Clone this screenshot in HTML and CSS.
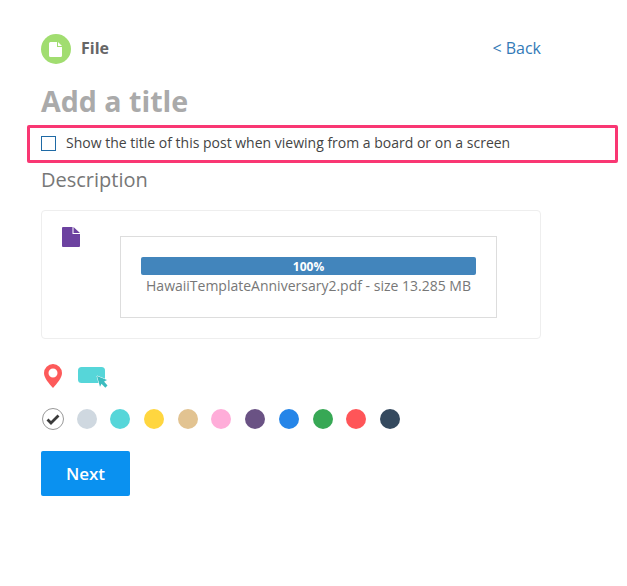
FILE: index.html
```html
<!DOCTYPE html>
<html lang="en">
<head>
<meta charset="utf-8">
<title>File</title>
<link rel="stylesheet" href="styles.css">
</head>
<body>
<main class="page">
  <header class="head">
    <div class="type">
      <span class="type-icon">
        <svg width="14" height="15" viewBox="0 0 14 15"><path d="M1.500 0H8v5h5v8.500a1.500 1.500 0 0 1-1.500 1.500h-10A1.500 1.500 0 0 1 0 13.500V1.500A1.500 1.500 0 0 1 1.500 0zM9 0l4 4H9z" fill="#fff"/></svg>
      </span>
      <span class="type-name">File</span>
    </div>
    <a class="back" href="#">&lt; Back</a>
  </header>
  <h1 class="title">Add a title</h1>
  <label class="show-title">
    <span class="check"></span>
    <span class="show-text">Show the title of this post when viewing from a board or on a screen</span>
  </label>
  <div class="desc">Description</div>
  <section class="card">
    <svg class="doc" width="18" height="20" viewBox="0 0 18 20"><path d="M1 0h9.500v7H18v12a1 1 0 0 1-1 1H1a1 1 0 0 1-1-1V1a1 1 0 0 1 1-1zM11.500 0L18 6h-6.500z" fill="#6c42a0"/></svg>
    <div class="upload">
      <div class="bar">100%</div>
      <div class="fname">HawaiiTemplateAnniversary2.pdf - size 13.285 MB</div>
    </div>
  </section>
  <div class="tools">
    <svg width="18" height="24" viewBox="0 0 18 24"><path fill-rule="evenodd" d="M9 0a9 9 0 0 1 9 9c0 5-5 10.500-9 15C5 19.500 0 14 0 9a9 9 0 0 1 9-9zm0 4.500a4.500 4.500 0 1 0 0 9 4.500 4.500 0 0 0 0-9z" fill="#fd5a5a"/></svg>
    <svg width="30" height="21" viewBox="0 0 30 21"><rect x="0" y="0" width="27" height="16" rx="3.500" fill="#56d6d9"/><path class="cursor" d="M19 9l10 4-3 1.500 3.500 4-2.200 2.200-3.800-4-1.500 3z"/></svg>
  </div>
  <div class="swatches">
    <span class="swatch none">
      <svg width="14" height="11" viewBox="0 0 14 11"><path d="M1.500 5.500l3.500 3.500 7.500-7.500" fill="none" stroke="#3a3a3a" stroke-width="2.800"/></svg>
    </span>
    <span class="swatch c1"></span>
    <span class="swatch c2"></span>
    <span class="swatch c3"></span>
    <span class="swatch c4"></span>
    <span class="swatch c5"></span>
    <span class="swatch c6"></span>
    <span class="swatch c7"></span>
    <span class="swatch c8"></span>
    <span class="swatch c9"></span>
    <span class="swatch c10"></span>
  </div>
  <button class="next" type="button">Next</button>
</main>
</body>
</html>
```

FILE: styles.css
```css
* { box-sizing: border-box; }
html, body { margin: 0; padding: 0; background: #fff; }
body { font-family: "Open Sans", "Liberation Sans", sans-serif; color: #555; }
.page { width: 500px; margin-left: 41px; padding-top: 34px; }
.head { display: flex; justify-content: space-between; align-items: center; height: 30px; }
.type { display: flex; align-items: center; gap: 10px; }
.type-icon { width: 30px; height: 30px; border-radius: 50%; background: #a1dd70; display: flex; align-items: center; justify-content: center; }
.type-name { margin-bottom: 3px; font-size: 16px; font-weight: 700; color: #666; line-height: 28px; }
.back { margin-bottom: 2px; font-size: 16px; color: #337ab7; text-decoration: none; line-height: 28px; }
.title { margin: 16px 0 0; font-size: 28.600px; font-weight: 700; color: #aaa; line-height: 42px; }
.show-title { display: flex; align-items: center; gap: 10px; width: 591px; height: 38px; margin: 3px 0 0 -14px; padding: 0 0 1px 11px; border: 3px solid #f93773; border-radius: 2px; font-size: 14px; color: #444; }
.check { width: 15px; height: 15px; border: 1px solid #1f6aa5; flex: none; }
.show-text { margin-bottom: 2px; }
.desc { margin-top: 3px; font-size: 20px; line-height: 28px; color: #777; }
.card { display: flex; align-items: flex-start; height: 129px; margin-top: 16px; padding: 16px 43px 0 20px; border: 1px solid #eee; border-radius: 4px; }
.doc { flex: none; }
.upload { width: 377px; height: 82px; margin: 9px 0 0 40px; padding: 20px 20px 0; border: 1px solid #ddd; }
.bar { height: 18px; padding-top: 1px; background: #4285bc; border-radius: 2px; color: #fff; font-size: 12px; font-weight: 700; line-height: 18px; text-align: center; }
.fname { margin-top: 1px; font-size: 14px; line-height: 20px; color: #777; text-align: center; }
.tools { display: flex; align-items: flex-start; gap: 16px; margin: 25px 0 0 3px; }
.tools svg:last-child { margin-top: 3px; }
.cursor { fill: #3cbcbf; stroke: #fff; stroke-width: 1; paint-order: stroke; }
.swatches { display: flex; align-items: center; gap: 13.700px; margin: 20px 0 0 1px; height: 22px; }
.swatch { width: 20px; height: 20px; border-radius: 50%; flex: none; }
.none { width: 22px; height: 22px; margin-right: -1px; background: #fff; border: 1px solid #999; display: flex; align-items: center; justify-content: center; }
.c1 { background: #cfd8e0; }
.c2 { background: #56d6d9; }
.c3 { background: #ffd63f; }
.c4 { background: #e2c391; }
.c5 { background: #ffadd9; }
.c6 { background: #6a5284; }
.c7 { background: #2585e8; }
.c8 { background: #37a855; }
.c9 { background: #ff5558; }
.c10 { background: #34495e; }
.next { display: block; width: 89px; height: 45px; margin-top: 21px; padding: 0; border: 0; border-radius: 2px; background: #0a91f0; color: #fff; font-family: inherit; font-size: 17px; font-weight: 600; }
```
